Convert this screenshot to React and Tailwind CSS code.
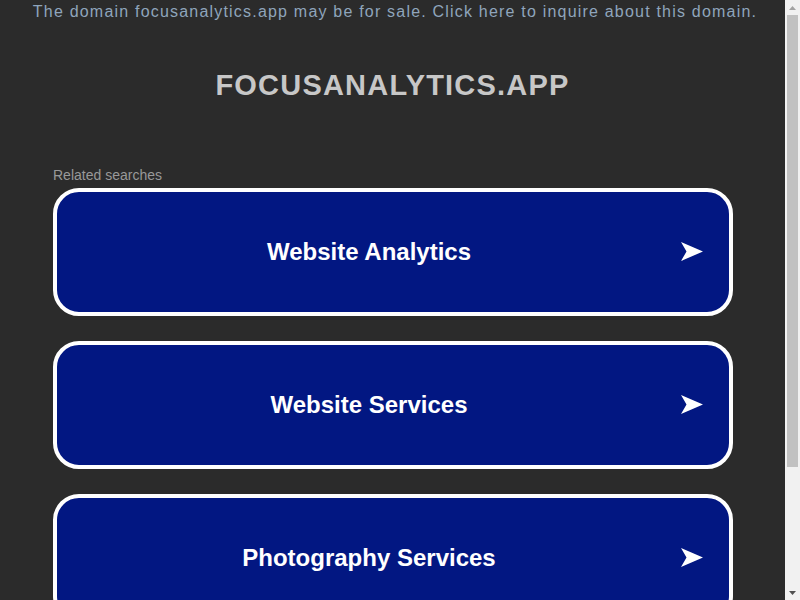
const searches = ['Website Analytics', 'Website Services', 'Photography Services'];

const Arrow = () => (
  <svg width="22" height="20" viewBox="0 0 22 20" className="block">
    <polygon points="0,0 22,9.5 0,19 5.5,9.5" fill="#ffffff" />
  </svg>
);

const SearchBox = ({ label }) => (
  <a
    href="#"
    className="flex items-center h-[128px] rounded-[26px] border-4 border-white bg-[#021782] text-white"
  >
    <span className="flex-1 text-center text-[24px] font-bold leading-[30px]">{label}</span>
    <span className="w-[48px] flex items-center">
      <Arrow />
    </span>
  </a>
);

// page scrollbar, drawn since the screenshot hides the native one
const Scrollbar = () => (
  <div className="w-[15px] shrink-0 bg-[#f1f1f1] flex flex-col">
    <div className="h-[15px] flex items-center justify-center">
      <svg width="7" height="4" viewBox="0 0 7 4" className="block">
        <polygon points="3.5,0 7,4 0,4" fill="#a3a3a3" />
      </svg>
    </div>
    <div className="flex-1 px-[2px]">
      <div className="h-[452px] bg-[#c1c1c1]" />
    </div>
    <div className="h-[15px] flex items-center justify-center">
      <svg width="7" height="4" viewBox="0 0 7 4" className="block">
        <polygon points="0,0 7,0 3.5,4" fill="#505050" />
      </svg>
    </div>
  </div>
);

export default function App() {
  return (
    <div className="flex h-[600px] overflow-hidden bg-[#2b2b2b] font-['Liberation_Sans',Arial,sans-serif]">
      <div className="flex-1 min-w-0 overflow-hidden">
        <div className="pl-[5px] text-center text-[16px] leading-[24px] tracking-[1.2px] text-[#8fa5bc]">
          The domain focusanalytics.app may be for sale. Click here to inquire about this domain.
        </div>

        <h1 className="mt-[43px] text-center text-[29px] leading-[36px] font-bold tracking-[1.2px] text-[#c7c7c7]">
          FOCUSANALYTICS.APP
        </h1>

        <div className="mx-[53px] mt-[62px]">
          <div className="text-[14px] leading-[20px] text-[#999999]">Related searches</div>
          <div className="mt-[3px] flex flex-col gap-[25px] w-[680px]">
            {searches.map((s) => (
              <SearchBox key={s} label={s} />
            ))}
          </div>
        </div>
      </div>
      <Scrollbar />
    </div>
  );
}
